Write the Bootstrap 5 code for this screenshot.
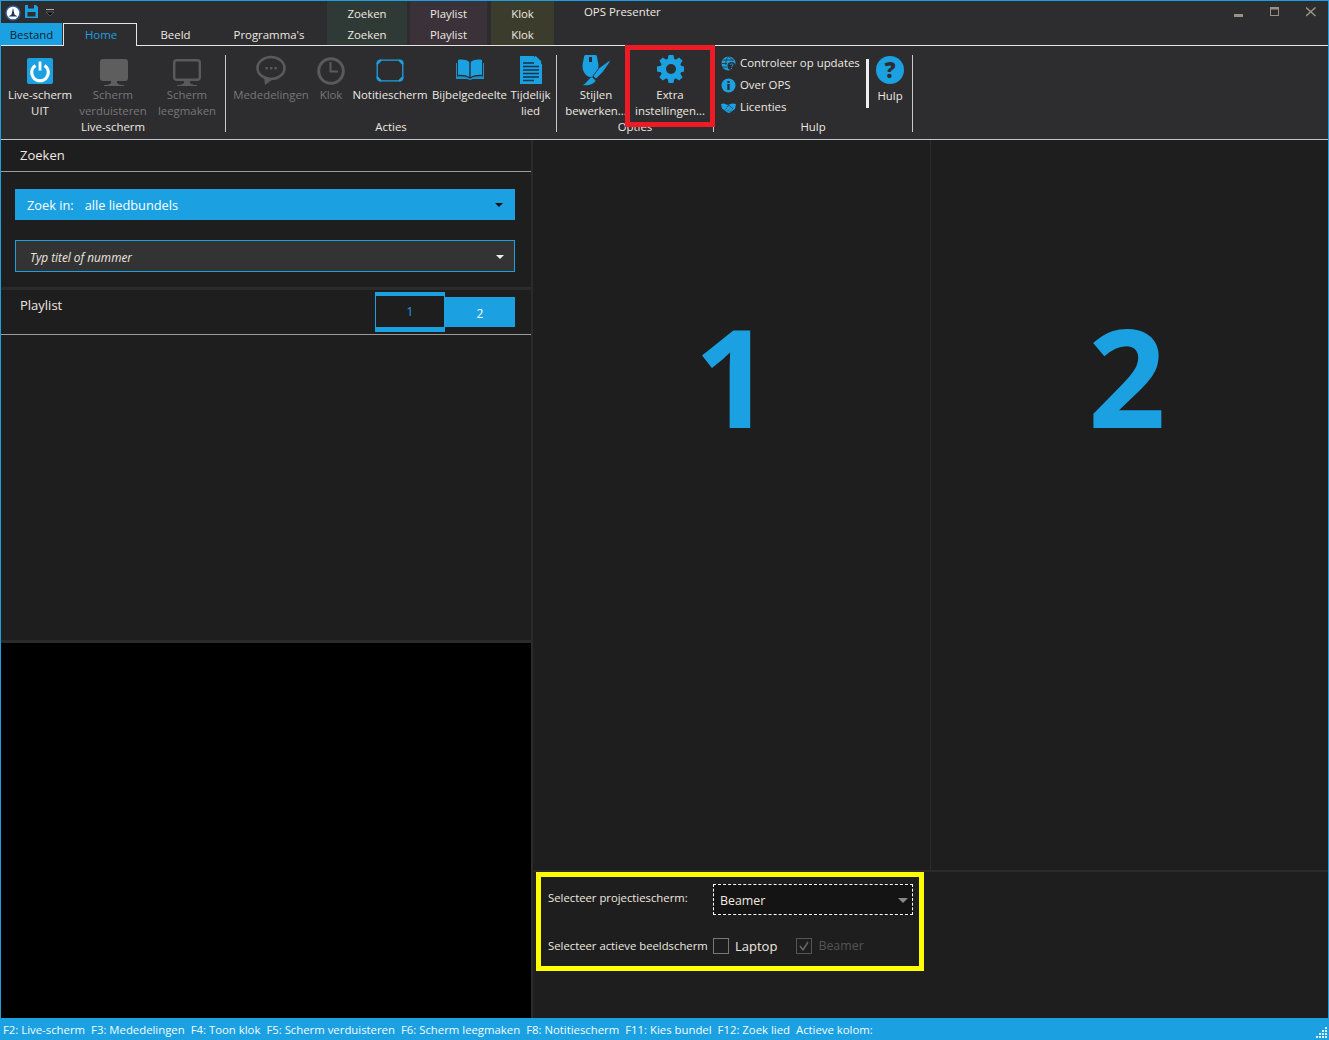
<!DOCTYPE html>
<html lang="nl">
<head>
    <meta charset="UTF-8">
    <title>OPS Presenter</title>
    <link href="https://cdn.jsdelivr.net/npm/bootstrap@5.3.0/dist/css/bootstrap.min.css" rel="stylesheet">
    <style>
        html, body { height: 100%; }
        body {
            background: #1e1e1e;
            color: #efe9e0;
            font: 11.4px/16px "Open Sans", "Noto Sans", sans-serif;
            overflow: hidden;
        }
        svg { display: block; }
        .app-window {
            width: 1329px; height: 1040px;
            border: 1px solid #1ba1e2;
            border-bottom: 0;
            position: relative;
        }
        /* title + tabs */
        .top-bar { height: 45px; background: #2d2d30; border-bottom: 1px solid #e4e4e4; flex: none; }
        .top-left { width: 326px; flex: none; }
        .qat-row { height: 22px; padding: 4px 0 0 4px; }
        .tab-row { height: 22px; }
        .tab-file { width: 61px; background: #1ba1e2; color: #10222c; line-height: 24px; text-align: center; }
        .tab-item { line-height: 22px; text-align: center; }
        .tab-home {
            width: 74px; margin-left: 1px; height: 23px;
            border: 1px solid #e4e4e4; border-bottom: 0;
            background: #2d2d30; color: #1ba1e2;
            line-height: 21px; padding-left: 2px;
        }
        .tab-beeld { width: 77px; line-height: 24px; }
        .tab-prog { width: 110px; line-height: 24px; }
        .ctx-col { height: 44px; text-align: center; padding-top: 2px; line-height: 21px; flex: none; }
        .ctx-green { width: 80px; background: #2f3a36; }
        .ctx-purple { width: 77px; background: #3b3139; margin-left: 3px; }
        .ctx-olive { width: 63px; background: #3c3c2d; margin-left: 4px; }
        .app-title { margin-left: 30px; padding-top: 3px; }
        .win-btns { margin-left: auto; padding: 6px 12px 0 0; gap: 26px; }
        /* ribbon */
        .ribbon { height: 94px; background: #2d2d30; border-bottom: 1px solid #b9c7cc; flex: none; position: relative; }
        .rb-group { flex: none; }
        .rb-buttons { height: 73px; }
        .rb-label { text-align: center; height: 16px; white-space: nowrap; }
        .rb-sep { width: 1px; height: 77px; margin-top: 9px; background: #c9c9c9; flex: none; }
        .rb-btn { display: flex; flex-direction: column; align-items: center; flex: none; white-space: nowrap; text-align: center; }
        .rb-btn.off { color: #777; }
        .rb-icon { height: 41px; padding-top: 9px; }
        .rb-low { padding-top: 1px; }
        .pad-live { width: 224px; }
        .pad-acties { width: 330px; }
        .pad-opties { width: 156px; }
        .pad-hulp { width: 198px; }
        .w-78 { width: 78px; } .w-68 { width: 68px; } .w-90 { width: 90px; } .w-30 { width: 30px; }
        .w-88 { width: 88px; } .w-71 { width: 71px; } .w-51 { width: 51px; } .w-70 { width: 70px; }
        .shift-1 { padding-left: 2px; }
        .link-list { width: 152px; padding: 6px 0 0 7px; flex: none; }
        .link-row { height: 22px; gap: 4px; white-space: nowrap; }
        .white-bar { width: 3px; height: 49px; background: #eee; margin: 13px 0 0 0; flex: none; }
        .help-btn { width: 42px; }
        .red-mark { position: absolute; left: 624px; top: -1px; width: 90px; height: 82px; border: 5px solid #ed1c24; pointer-events: none; }
        /* panels */
        .work-area { flex: 1 1 auto; min-height: 0; }
        .left-pane { width: 530px; flex: none; }
        .pane-head { height: 32px; border-bottom: 1px solid #9c9c9c; padding: 7px 0 0 19px; font-size: 13px; flex: none; }
        .search-box { padding: 17px 16px 15px 14px; flex: none; }
        .pick-blue {
            height: 31px; background: #1ba1e2; color: #fff; font-size: 12.8px;
            padding: 0 12px; margin-bottom: 20px;
        }
        .pick-blue b { font-weight: 400; margin-right: 11px; }
        .pick-input {
            height: 32px; background: #333; border: 1px solid #1ba1e2;
            padding: 1px 10px 0 14px; font-style: italic; font-size: 11.8px;
        }
        .caret-down { width: 0; height: 0; border-left: 4px solid transparent; border-right: 4px solid transparent; border-top: 4px solid #111; margin-left: auto; }
        .caret-light { border-top-color: #eee; }
        .caret-grey { border-top-color: #888; border-left-width: 5px; border-right-width: 5px; border-top-width: 5px; }
        .bar-h { height: 3px; background: #2b2b2b; flex: none; }
        .bar-v { width: 2px; background: #2b2b2b; flex: none; }
        .playlist-head { height: 45px; border-bottom: 1px solid #9c9c9c; padding-left: 19px; flex: none; }
        .playlist-head > span { font-size: 13px; margin-top: 7px; }
        .pl-tabs { margin-left: auto; margin-right: 16px; padding-top: 2px; }
        .pl-tab { width: 70px; font-size: 12px; text-align: center; flex: none; }
        .pl-on { height: 40px; border: 1px solid #1ba1e2; border-width: 4px 1px 5px; color: #1ba1e2; line-height: 32px; background: #1e1e1e; }
        .pl-off { height: 30px; margin-top: 5px; background: #1ba1e2; color: #fff; line-height: 34px; }
        .list-area { height: 305px; flex: none; }
        .preview-black { background: #000; flex: 1 1 auto; }
        .screens { flex: 1 1 auto; min-height: 0; }
        .screen-col { width: 397px; flex: none; display: flex; justify-content: center; padding-left: 3px; }
        .screen-col + .screen-col { width: 398px; border-left: 1px solid #2b2b2b; padding: 0 5px 0 0; }
        .big-no { font: 700 136px/1 "Open Sans", sans-serif; color: #1ba1e2; margin-top: 168px; height: 136px; }
        .screen-setup { height: 148px; border-top: 2px solid #2b2b2b; padding: 0 0 0 3px; flex: none; }
        .yellow-box { width: 388px; height: 99px; border: 5px solid #ffff00; padding: 0 7px; }
        .setup-row { height: 31px; }
        .setup-first { margin-top: 7px; }
        .setup-second { margin-top: 15px; }
        .setup-label { width: 160px; overflow: hidden; white-space: nowrap; flex: none; margin-right: 5px; font-size: 11.3px; }
        .label-up { margin-top: -4px; }
        .combo-box { width: 200px; height: 31px; border: 1px dashed #fff; background: #141414; padding: 2px 4px 0 6px; font-size: 12.4px; flex: none; }
        .box-check { width: 16px; height: 16px; border: 1px solid #777; flex: none; }
        .box-off { border-color: #555; margin-left: 19px; }
        .laptop-txt { font-size: 13px; margin-left: 6px; }
        .beamer-dim { color: #555; margin-left: 6px; font-size: 12.4px; }
        .status-bar { height: 22px; background: #1ba1e2; color: #f4fbff; flex: none; padding: 2px 0 0 2px; gap: 6px; white-space: nowrap; position: relative; font-size: 11.35px; }
        .grip { position: absolute; right: 1px; bottom: 2px; }
    </style>
</head>
<body>
<div class="app-window d-flex flex-column">
    <div class="top-bar d-flex">
        <div class="top-left">
            <div class="qat-row d-flex align-items-start">
                <svg width="16" height="16" viewBox="0 0 16 16"><circle cx="8" cy="8" r="7" fill="#fff" stroke="#2a5ba8" stroke-width="1.4"/><path d="M8 3 L9.500 9.500 L12.500 11.500 H3.500 L6.500 9.500Z" fill="#24344f"/></svg>
                <svg class="ms-1" width="13" height="13" viewBox="0 0 13 13"><path d="M0 0H11L13 2V13H0Z" fill="#1ba1e2"/><rect x="3" y="0" width="6" height="3.500" fill="#2d2d30"/><rect x="2.500" y="7" width="8" height="4.500" fill="#2d2d30"/></svg>
                <svg class="ms-2 mt-1" width="8" height="7" viewBox="0 0 8 7"><rect y="0" width="8" height="1" fill="#aaa"/><path d="M0 3H8L4 7Z" fill="#111" stroke="#888" stroke-width=".5"/></svg>
            </div>
            <div class="tab-row d-flex">
                <div class="tab-file">Bestand</div>
                <div class="tab-item tab-home">Home</div>
                <div class="tab-item tab-beeld">Beeld</div>
                <div class="tab-item tab-prog">Programma's</div>
            </div>
        </div>
        <div class="ctx-col ctx-green">Zoeken<br>Zoeken</div>
        <div class="ctx-col ctx-purple">Playlist<br>Playlist</div>
        <div class="ctx-col ctx-olive">Klok<br>Klok</div>
        <div class="app-title">OPS Presenter</div>
        <div class="win-btns d-flex align-items-start">
            <svg width="10" height="10" viewBox="0 0 10 10"><rect y="7" width="9" height="3" fill="#9a9186"/></svg>
            <svg width="10" height="10" viewBox="0 0 10 10"><rect x=".5" y=".5" width="8" height="8" fill="none" stroke="#9a9186"/><rect width="9" height="2.500" fill="#9a9186"/></svg>
            <svg width="10" height="10" viewBox="0 0 10 10"><path d="M0 .5 9.500 9M9.500 .5 0 9" stroke="#9a9186" stroke-width="1.500"/></svg>
        </div>
    </div>

    <div class="ribbon d-flex">
        <div class="rb-group pad-live">
            <div class="rb-buttons d-flex">
                <div class="rb-btn w-78">
                    <div class="rb-icon"><svg width="26" height="31" viewBox="0 -3 26 31"><rect width="26" height="26" rx="2" fill="#1ba1e2"/><path d="M8.500 7.500a8.300 8.300 0 1 0 9 0" fill="none" stroke="#fff" stroke-width="3"/><rect x="11.600" y="3.500" width="2.800" height="9" fill="#fff"/></svg></div>
                    Live-scherm<br>UIT
                </div>
                <div class="rb-btn w-68 off">
                    <div class="rb-icon"><svg width="30" height="31" viewBox="-1 -4 30 31"><rect x="1" y="0" width="28" height="22" rx="3" fill="#5e5e5e"/><path d="M12 22H18V24C19 25.500 22 26 25 26V27H5V26C8 26 11 25.500 12 24Z" fill="#5e5e5e"/></svg></div>
                    Scherm<br>verduisteren
                </div>
                <div class="rb-btn w-78 off shift-1">
                    <div class="rb-icon"><svg width="30" height="31" viewBox="0 -4 30 31"><rect x="2.200" y="1.200" width="25.600" height="19.600" rx="2.500" fill="none" stroke="#5a5a5a" stroke-width="2.400"/><path d="M12 22H18V24C19 25.500 22 26 25 26V27H5V26C8 26 11 25.500 12 24Z" fill="#5a5a5a"/></svg></div>
                    <span class="rb-low">Scherm</span>leegmaken
                </div>
            </div>
            <div class="rb-label">Live-scherm</div>
        </div>
        <div class="rb-sep"></div>
        <div class="rb-group pad-acties">
            <div class="rb-buttons d-flex">
                <div class="rb-btn w-90 off">
                    <div class="rb-icon"><svg width="30" height="31" viewBox="0 -1 30 31"><ellipse cx="15" cy="12" rx="13.500" ry="11" fill="none" stroke="#5a5a5a" stroke-width="2.600"/><path d="M8 20 9 29 17 23Z" fill="#5a5a5a"/><rect x="9.500" y="11" width="2.400" height="2.400" fill="#5a5a5a"/><rect x="14" y="11" width="2.400" height="2.400" fill="#5a5a5a"/><rect x="18.500" y="11" width="2.400" height="2.400" fill="#5a5a5a"/></svg></div>
                    Mededelingen
                </div>
                <div class="rb-btn w-30 off">
                    <div class="rb-icon"><svg width="28" height="31" viewBox="0 -2 28 31"><circle cx="14" cy="14" r="12.300" fill="none" stroke="#5a5a5a" stroke-width="3"/><path d="M13.500 5V14.500H21" fill="none" stroke="#5a5a5a" stroke-width="2"/></svg></div>
                    Klok
                </div>
                <div class="rb-btn w-88">
                    <div class="rb-icon"><svg width="28" height="31" viewBox="0 -4 28 31"><rect x="1.200" y="1.200" width="25.600" height="20.600" rx="3" fill="none" stroke="#1ba1e2" stroke-width="1.300"/><path d="M1 5 5 1M23 1 27 5M27 18 23 22M5 22 1 18" stroke="#1ba1e2" stroke-width="2" fill="none"/></svg></div>
                    Notitiescherm
                </div>
                <div class="rb-btn w-71">
                    <div class="rb-icon"><svg width="30" height="31" viewBox="0 -3 30 31"><path d="M14.300 4C11 1.500 6.500 1 3 2V17C7 16.500 11 17 14.300 19Z" fill="#1ba1e2"/><path d="M15.700 4C19 1.500 23.500 1 27 2V17C23 16.500 19 17 15.700 19Z" fill="#1ba1e2"/><path d="M1 5H2V18.500C7 18 12 18.500 14.500 20.500H15.500C18 18.500 23 18 28 18.500V5H29V21H18L15 22 12 21H1Z" fill="#1992cc"/></svg></div>
                    Bijbelgedeelte
                </div>
                <div class="rb-btn w-51">
                    <div class="rb-icon"><svg width="22" height="31" viewBox="0 -1 22 31"><path d="M0 0H14L22 8V28H0Z" fill="#1ba1e2"/><path d="M14 0 22 0V8Z" fill="#2d2d30"/><path d="M15 .5 21 6.500" stroke="#1ba1e2" stroke-width="1.800"/><path d="M3 7H14M3 10.500H19M3 14H19M3 17.500H19M3 21H19M3 24.500H14" stroke="#12334a" stroke-width="1.300"/></svg></div>
                    <span class="rb-low">Tijdelijk</span>lied
                </div>
            </div>
            <div class="rb-label">Acties</div>
        </div>
        <div class="rb-sep"></div>
        <div class="rb-group pad-opties">
            <div class="rb-buttons d-flex">
                <div class="rb-btn w-78">
                    <div class="rb-icon"><svg width="28" height="31" viewBox="0 0 28 31"><path d="M2 2C2 .5 3 0 4 0H13C15 0 15 1 15 2L16.500 10C16.500 17 13 22 8.500 22 4 22 0 16 .5 10Z" fill="#1ba1e2"/><rect x="7" y="2" width="3" height="5" fill="#2d2d30"/><path d="M28 5 17 13 11 21 14 24 21 17 28 7Z" fill="#1ba1e2" stroke="#2d2d30" stroke-width=".8"/><path d="M10 22 13.500 25.500C12.500 29 6 31 1 30 4.500 28.500 6 24 10 22Z" fill="#1ba1e2"/></svg></div>
                    <span class="rb-low">Stijlen</span>bewerken...
                </div>
                <div class="rb-btn w-70">
                    <div class="rb-icon"><svg width="28" height="31" viewBox="-15 -14 28 31"><g fill="#1ba1e2"><circle r="10.500"/><path d="M-3.500 -9 L-2.400 -14 H2.400 L3.500 -9Z"/><path d="M-3.500 -9 L-2.400 -14 H2.400 L3.500 -9Z" transform="rotate(45)"/><path d="M-3.500 -9 L-2.400 -14 H2.400 L3.500 -9Z" transform="rotate(90)"/><path d="M-3.500 -9 L-2.400 -14 H2.400 L3.500 -9Z" transform="rotate(135)"/><path d="M-3.500 -9 L-2.400 -14 H2.400 L3.500 -9Z" transform="rotate(180)"/><path d="M-3.500 -9 L-2.400 -14 H2.400 L3.500 -9Z" transform="rotate(225)"/><path d="M-3.500 -9 L-2.400 -14 H2.400 L3.500 -9Z" transform="rotate(270)"/><path d="M-3.500 -9 L-2.400 -14 H2.400 L3.500 -9Z" transform="rotate(315)"/></g><circle r="5" fill="#2d2d30"/></svg></div>
                    <span class="rb-low">Extra</span>instellingen...
                </div>
            </div>
            <div class="rb-label">Opties</div>
        </div>
        <div class="rb-sep"></div>
        <div class="rb-group pad-hulp">
            <div class="rb-buttons d-flex">
                <div class="link-list">
                    <div class="link-row d-flex align-items-center">
                        <svg width="15" height="15" viewBox="0 0 15 15"><circle cx="7.500" cy="7.500" r="7" fill="#1ba1e2"/><path d="M.5 7.500H6M7.500 .5C5 3 4.500 6 5 9M7.500 .5C10 2 11 3.500 11.500 5M1.500 4H13M2 11H6" stroke="#2d2d30" fill="none" stroke-width=".8"/><circle cx="10.500" cy="10" r="4" fill="#2d2d30"/><path d="M9 8.800C9.300 7.500 11.800 7.500 12 8.800 12 10 10.500 10 10.500 11.200M10.500 12V13" stroke="#1ba1e2" fill="none" stroke-width="1"/></svg>
                        Controleer op updates
                    </div>
                    <div class="link-row d-flex align-items-center">
                        <svg width="15" height="15" viewBox="0 0 15 15"><circle cx="7.500" cy="7.500" r="7" fill="#1ba1e2"/><rect x="6.300" y="6" width="2.400" height="6" fill="#2d2d30"/><rect x="6.300" y="3" width="2.400" height="2" fill="#2d2d30"/></svg>
                        Over OPS
                    </div>
                    <div class="link-row d-flex align-items-center">
                        <svg width="15" height="15" viewBox="0 0 15 15"><path d="M0 4 3 3.500 7 5 11 3.500 15 4 14 9 8.500 13 6.500 12.500 1 8.500Z" fill="#1ba1e2"/><path d="M5.500 7 8 5.300 12 9M4.500 9.500 6 8M6.500 11 8 9.500M8.500 12 10 10.500" stroke="#2d2d30" fill="none" stroke-width=".7"/></svg>
                        Licenties
                    </div>
                </div>
                <div class="white-bar"></div>
                <div class="rb-btn help-btn">
                    <div class="rb-icon"><svg width="28" height="31" viewBox="0 -1 28 31"><circle cx="14" cy="14" r="14" fill="#1ba1e2"/><text x="14" y="22" text-anchor="middle" font-family="Open Sans, sans-serif" font-weight="800" font-size="22" fill="#2d2d30">?</text></svg></div>
                    <span class="rb-low">Hulp</span>
                </div>
            </div>
            <div class="rb-label">Hulp</div>
        </div>
        <div class="rb-sep"></div>
        <div class="red-mark"></div>
    </div>

    <div class="work-area d-flex">
        <div class="left-pane d-flex flex-column">
            <div class="pane-head">Zoeken</div>
            <div class="search-box">
                <div class="pick-blue d-flex align-items-center"><b>Zoek in:</b>alle liedbundels<span class="caret-down"></span></div>
                <div class="pick-input d-flex align-items-center">Typ titel of nummer<span class="caret-down caret-light"></span></div>
            </div>
            <div class="bar-h"></div>
            <div class="playlist-head d-flex">
                <span>Playlist</span>
                <div class="pl-tabs d-flex align-items-start">
                    <div class="pl-tab pl-on">1</div>
                    <div class="pl-tab pl-off">2</div>
                </div>
            </div>
            <div class="list-area"></div>
            <div class="bar-h"></div>
            <div class="preview-black"></div>
        </div>
        <div class="bar-v"></div>
        <div class="flex-grow-1 d-flex flex-column">
            <div class="screens d-flex">
                <div class="screen-col"><div class="big-no">1</div></div>
                <div class="screen-col"><div class="big-no">2</div></div>
            </div>
            <div class="screen-setup">
                <div class="yellow-box">
                    <div class="setup-row setup-first d-flex align-items-center">
                        <div class="setup-label label-up">Selecteer projectiescherm:</div>
                        <div class="combo-box d-flex align-items-center">Beamer<span class="caret-down caret-grey"></span></div>
                    </div>
                    <div class="setup-row setup-second d-flex align-items-center">
                        <div class="setup-label">Selecteer actieve beeldscherm</div>
                        <div class="box-check"></div>
                        <span class="laptop-txt">Laptop</span>
                        <div class="box-check box-off d-flex align-items-center justify-content-center"><svg width="12" height="12" viewBox="0 0 12 12"><path d="M2 6 5 10 10 2" fill="none" stroke="#666" stroke-width="1.500"/></svg></div>
                        <span class="beamer-dim">Beamer</span>
                    </div>
                </div>
            </div>
        </div>
    </div>

    <div class="status-bar d-flex align-items-center">
        <span>F2: Live-scherm</span><span>F3: Mededelingen</span><span>F4: Toon klok</span><span>F5: Scherm verduisteren</span><span>F6: Scherm leegmaken</span><span>F8: Notitiescherm</span><span>F11: Kies bundel</span><span>F12: Zoek lied</span><span>Actieve kolom:</span>
        <svg class="grip" width="11" height="11" viewBox="0 0 11 11" fill="#dff3fb"><rect x="9" y="0" width="2" height="2"/><rect x="6" y="3" width="2" height="2"/><rect x="9" y="3" width="2" height="2"/><rect x="3" y="6" width="2" height="2"/><rect x="6" y="6" width="2" height="2"/><rect x="9" y="6" width="2" height="2"/><rect x="0" y="9" width="2" height="2"/><rect x="3" y="9" width="2" height="2"/><rect x="6" y="9" width="2" height="2"/><rect x="9" y="9" width="2" height="2"/></svg>
    </div>
</div>
<script src="https://cdn.jsdelivr.net/npm/bootstrap@5.3.0/dist/js/bootstrap.bundle.min.js"></script>
</body>
</html>
